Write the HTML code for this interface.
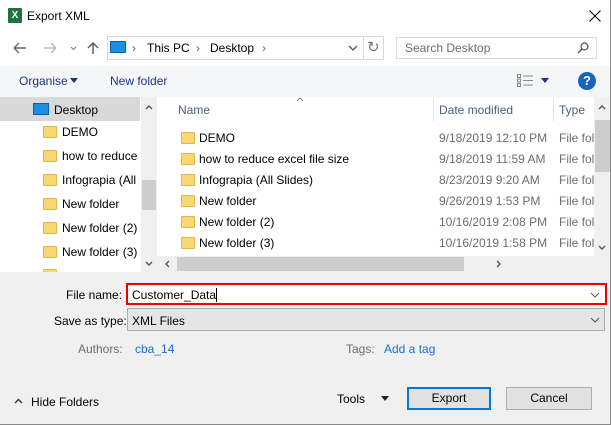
<!DOCTYPE html>
<html><head><style>
*{margin:0;padding:0;box-sizing:border-box}
body{width:611px;height:425px;overflow:hidden;background:#f0f0f0;font-family:"Liberation Sans",sans-serif;font-size:12px;color:#000;position:relative}
.a{position:absolute;white-space:nowrap;line-height:14px}
.fold{position:absolute;width:14px;height:12px;background:#f8d775;border:1px solid #e2b84a;border-radius:1px}
.pc{position:absolute;width:16px;height:12px;background:#1a8fe3;border:1px solid #0b5fa5}
</style></head><body>
<div class="a" style="left:0;top:0;width:611px;height:97px;background:#fff"></div>
<!-- title -->
<div class="a" style="left:8px;top:8px;width:14px;height:15px;background:#1e7145;border-radius:1px;color:#fff;font-size:10px;font-weight:bold;text-align:center;line-height:15px">X</div>
<div class="a" style="left:27px;top:9px;font-size:12px">Export XML</div>
<svg class="a" style="left:589px;top:10px" width="12" height="12"><path d="M0.5 0.5L11.5 11.5M11.5 0.5L0.5 11.5" stroke="#000" stroke-width="1"/></svg>
<!-- nav -->
<svg class="a" style="left:12px;top:41px" width="90" height="14"><path d="M2 7H14M2 7L7 2M2 7L7 12" stroke="#666" fill="none" stroke-width="1.4"/><path d="M32 7H44M44 7L39 2M44 7L39 12" stroke="#bbb" fill="none" stroke-width="1.4"/><path d="M59 6L61.5 8.5L64 6" stroke="#777" fill="none"/><path d="M81 13V2M76 7L81 2L86 7" stroke="#555" fill="none" stroke-width="1.4"/></svg>
<div class="a" style="left:107px;top:36px;width:277px;height:24px;border:1px solid #d9d9d9;background:#fff"></div>
<div class="pc" style="left:110px;top:41px"></div>
<div class="a" style="left:132px;top:41px;color:#666">›</div>
<div class="a" style="left:147px;top:41px">This PC</div>
<div class="a" style="left:196px;top:41px;color:#666">›</div>
<div class="a" style="left:210px;top:41px">Desktop</div>
<div class="a" style="left:262px;top:41px;color:#666">›</div>
<svg class="a" style="left:348px;top:44px" width="10" height="8"><path d="M1 2L5 6L9 2" stroke="#555" fill="none" stroke-width="1.3"/></svg>
<div class="a" style="left:363px;top:36px;width:1px;height:24px;background:#d9d9d9"></div>
<div class="a" style="left:367px;top:39px;color:#777;font-size:15px;line-height:18px">↻</div>
<div class="a" style="left:396px;top:37px;width:201px;height:22px;border:1px solid #d9d9d9;background:#fff"></div>
<div class="a" style="left:405px;top:41px;color:#6d6d6d">Search Desktop</div>
<svg class="a" style="left:577px;top:42px" width="12" height="12"><circle cx="7.5" cy="4.5" r="3.5" stroke="#555" fill="none" stroke-width="1.2"/><path d="M5 7L1 11" stroke="#555" stroke-width="1.5"/></svg>
<!-- toolbar -->
<div class="a" style="left:0;top:66px;width:611px;height:31px;background:#f5f6f7"></div>
<div class="a" style="left:19px;top:74px;color:#1e3287">Organise</div>
<svg class="a" style="left:70px;top:78px" width="8" height="5"><path d="M0 0H8L4 5Z" fill="#1e3287"/></svg>
<div class="a" style="left:110px;top:74px;color:#1e3287">New folder</div>
<svg class="a" style="left:517px;top:74px" width="16" height="13"><g fill="none" stroke="#888"><rect x="0.5" y="0.5" width="3" height="3"/><rect x="0.5" y="5" width="3" height="3"/><rect x="0.5" y="9.5" width="3" height="3"/><path d="M6 2H16M6 6.5H16M6 11H16"/></g></svg>
<svg class="a" style="left:541px;top:78px" width="8" height="5"><path d="M0 0H8L4 5Z" fill="#1e3287"/></svg>
<div class="a" style="left:578px;top:72px;width:18px;height:18px;border-radius:50%;background:#1565c0;color:#fff;font-weight:bold;text-align:center;line-height:18px;font-size:13px">?</div>
<!-- left pane -->
<div class="a" style="left:0;top:97px;width:157px;height:175px;background:#fff"></div>
<div class="a" style="left:0;top:97px;width:140px;height:24px;background:#d9d9d9"></div>
<div class="pc" style="left:33px;top:103px"></div>
<div class="a" style="left:54px;top:103px">Desktop</div>
<div style="position:absolute;left:0;top:0;width:140px;height:272px;overflow:hidden">
<div class="fold" style="left:43px;top:126px"></div><div class="a" style="left:62px;top:125px">DEMO</div>
<div class="fold" style="left:43px;top:150px"></div><div class="a" style="left:62px;top:149px">how to reduce</div>
<div class="fold" style="left:43px;top:174px"></div><div class="a" style="left:62px;top:173px">Infograpia (All</div>
<div class="fold" style="left:43px;top:198px"></div><div class="a" style="left:62px;top:197px">New folder</div>
<div class="fold" style="left:43px;top:222px"></div><div class="a" style="left:62px;top:221px">New folder (2)</div>
<div class="fold" style="left:43px;top:246px"></div><div class="a" style="left:62px;top:245px">New folder (3)</div>
<div class="fold" style="left:43px;top:269px"></div>
</div>
<div class="a" style="left:141px;top:97px;width:16px;height:175px;background:#f0f0f0"></div>
<div class="a" style="left:142px;top:180px;width:14px;height:30px;background:#cdcdcd"></div>
<svg class="a" style="left:145px;top:104px" width="8" height="6"><path d="M1 5L4 2L7 5" stroke="#555" fill="none" stroke-width="1.4"/></svg>
<svg class="a" style="left:145px;top:261px" width="8" height="6"><path d="M1 1L4 4L7 1" stroke="#555" fill="none" stroke-width="1.4"/></svg>
<!-- right pane -->
<div class="a" style="left:157px;top:97px;width:454px;height:175px;background:#fff"></div>
<svg class="a" style="left:296px;top:97px" width="8" height="5"><path d="M1 4L4 1L7 4" stroke="#888" fill="none"/></svg>
<div class="a" style="left:178px;top:103px;color:#4c607a">Name</div>
<div class="a" style="left:433px;top:97px;width:1px;height:24px;background:#e5e5e5"></div>
<div class="a" style="left:439px;top:103px;color:#4c607a">Date modified</div>
<div class="a" style="left:553px;top:97px;width:1px;height:24px;background:#e5e5e5"></div>
<div class="a" style="left:559px;top:103px;color:#4c607a">Type</div>
<div style="position:absolute;left:0;top:0;width:594px;height:256px;overflow:hidden">
<div class="fold" style="left:181px;top:132px"></div><div class="a" style="left:199px;top:131px">DEMO</div><div class="a" style="left:439px;top:131px;color:#6d6d6d">9/18/2019 12:10 PM</div><div class="a" style="left:559px;top:131px;color:#6d6d6d">File fol</div>
<div class="fold" style="left:181px;top:153px"></div><div class="a" style="left:199px;top:152px">how to reduce excel file size</div><div class="a" style="left:439px;top:152px;color:#6d6d6d">9/18/2019 11:59 AM</div><div class="a" style="left:559px;top:152px;color:#6d6d6d">File fol</div>
<div class="fold" style="left:181px;top:174px"></div><div class="a" style="left:199px;top:173px">Infograpia (All Slides)</div><div class="a" style="left:439px;top:173px;color:#6d6d6d">8/23/2019 9:20 AM</div><div class="a" style="left:559px;top:173px;color:#6d6d6d">File fol</div>
<div class="fold" style="left:181px;top:195px"></div><div class="a" style="left:199px;top:194px">New folder</div><div class="a" style="left:439px;top:194px;color:#6d6d6d">9/26/2019 1:53 PM</div><div class="a" style="left:559px;top:194px;color:#6d6d6d">File fol</div>
<div class="fold" style="left:181px;top:216px"></div><div class="a" style="left:199px;top:215px">New folder (2)</div><div class="a" style="left:439px;top:215px;color:#6d6d6d">10/16/2019 2:08 PM</div><div class="a" style="left:559px;top:215px;color:#6d6d6d">File fol</div>
<div class="fold" style="left:181px;top:237px"></div><div class="a" style="left:199px;top:236px">New folder (3)</div><div class="a" style="left:439px;top:236px;color:#6d6d6d">10/16/2019 1:58 PM</div><div class="a" style="left:559px;top:236px;color:#6d6d6d">File fol</div>
</div>
<div class="a" style="left:594px;top:97px;width:17px;height:159px;background:#f0f0f0"></div>
<div class="a" style="left:595px;top:120px;width:15px;height:52px;background:#cdcdcd"></div>
<svg class="a" style="left:598px;top:104px" width="8" height="6"><path d="M1 5L4 2L7 5" stroke="#555" fill="none" stroke-width="1.4"/></svg>
<svg class="a" style="left:598px;top:245px" width="8" height="6"><path d="M1 1L4 4L7 1" stroke="#555" fill="none" stroke-width="1.4"/></svg>
<div class="a" style="left:157px;top:256px;width:454px;height:16px;background:#f0f0f0"></div>
<div class="a" style="left:177px;top:257px;width:287px;height:14px;background:#cdcdcd"></div>
<svg class="a" style="left:164px;top:260px" width="6" height="8"><path d="M5 1L2 4L5 7" stroke="#555" fill="none" stroke-width="1.4"/></svg>
<svg class="a" style="left:496px;top:260px" width="6" height="8"><path d="M1 1L4 4L1 7" stroke="#555" fill="none" stroke-width="1.4"/></svg>
<!-- bottom -->
<div class="a" style="left:66px;top:288px">File name:</div>
<div class="a" style="left:126px;top:283px;width:481px;height:22px;border:2px solid #e00;background:#fff"></div>
<div class="a" style="left:132px;top:288px">Customer_Data<span style="display:inline-block;width:1px;height:14px;background:#000;vertical-align:-3px"></span></div>
<svg class="a" style="left:590px;top:292px" width="10" height="6"><path d="M1 1L5 5L9 1" stroke="#555" fill="none"/></svg>
<div class="a" style="left:54px;top:314px">Save as type:</div>
<div class="a" style="left:127px;top:308px;width:478px;height:23px;border:1px solid #adadad;background:#e5e5e5"></div>
<div class="a" style="left:132px;top:314px">XML Files</div>
<svg class="a" style="left:590px;top:317px" width="10" height="6"><path d="M1 1L5 5L9 1" stroke="#555" fill="none"/></svg>
<div class="a" style="left:78px;top:342px;color:#6d6d6d">Authors:</div>
<div class="a" style="left:135px;top:342px;color:#1a6fd0">cba_14</div>
<div class="a" style="left:346px;top:342px;color:#6d6d6d">Tags:</div>
<div class="a" style="left:384px;top:342px;color:#1a6fd0">Add a tag</div>
<svg class="a" style="left:14px;top:398px" width="9" height="6"><path d="M1 5L4.5 1.5L8 5" stroke="#333" fill="none" stroke-width="1.4"/></svg>
<div class="a" style="left:31px;top:395px">Hide Folders</div>
<div class="a" style="left:337px;top:392px">Tools</div>
<svg class="a" style="left:381px;top:396px" width="8" height="5"><path d="M0 0H8L4 5Z" fill="#222"/></svg>
<div class="a" style="left:407px;top:387px;width:84px;height:23px;border:2px solid #0078d7;background:#e1e1e1;text-align:center;line-height:19px">Export</div>
<div class="a" style="left:506px;top:387px;width:86px;height:23px;border:1px solid #adadad;background:#e1e1e1;text-align:center;line-height:21px">Cancel</div>
<div class="a" style="left:610px;top:0;width:1px;height:425px;background:#888"></div>
<div class="a" style="left:0;top:424px;width:611px;height:1px;background:#888"></div>
</body></html>
